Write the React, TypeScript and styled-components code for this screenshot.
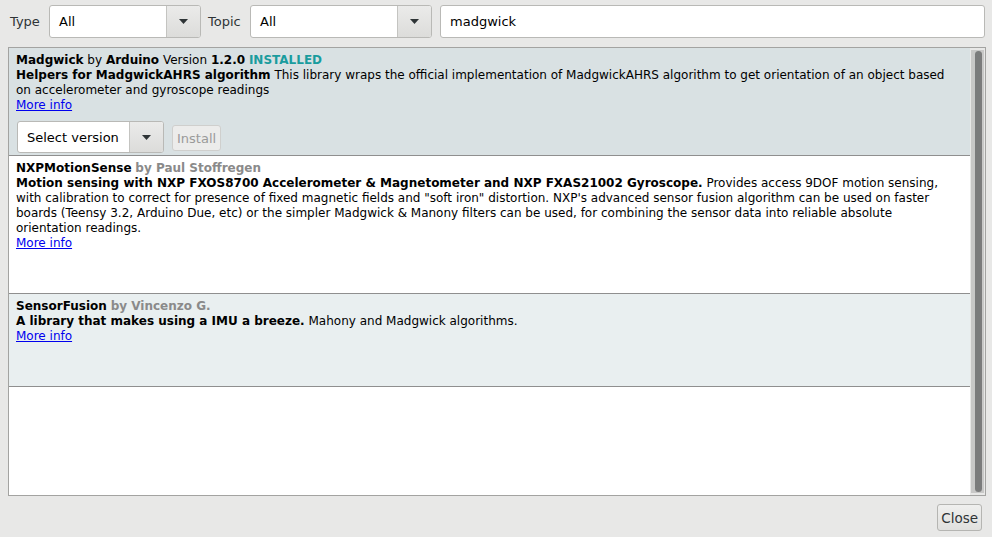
import React from 'react';
import styled, { createGlobalStyle } from 'styled-components';

const GlobalStyle = createGlobalStyle`
  html, body {
    margin: 0;
    padding: 0;
    background: #e8e8e7;
  }
  body {
    font-family: 'DejaVu Sans', 'Liberation Sans', sans-serif;
    color: #000;
  }
`;

const Window = styled.div`
  width: 992px;
  height: 537px;
  display: flex;
  flex-direction: column;
  background: #e8e8e7;
  overflow: hidden;
`;

const Toolbar = styled.div`
  display: flex;
  align-items: center;
  height: 33px;
  padding: 5px 7px 0 10px;
`;

const Label = styled.span<{ $width: number }>`
  width: ${(p) => p.$width}px;
  flex-shrink: 0;
  font-size: 13px;
  color: #2e3436;
`;

const Combo = styled.div<{ $width: number }>`
  width: ${(p) => p.$width}px;
  height: 33px;
  box-sizing: border-box;
  display: flex;
  border: 1px solid #b9b9b6;
  border-radius: 3px;
  background: #fff;
  margin-right: 7px;
  flex-shrink: 0;
`;

const ComboText = styled.div`
  flex: 1;
  display: flex;
  align-items: center;
  padding-left: 9px;
  font-size: 13px;
  color: #000;
`;

const ComboArrow = styled.div`
  width: 33px;
  display: flex;
  align-items: center;
  justify-content: center;
  border-left: 1px solid #c4c4c1;
  border-radius: 0 2px 2px 0;
  background: linear-gradient(#ebebea, #dcdcda);
`;

const SearchField = styled.div`
  flex: 1;
  height: 33px;
  box-sizing: border-box;
  border: 1px solid #b9b9b6;
  border-radius: 3px;
  background: #fff;
  display: flex;
  align-items: center;
  padding-left: 9px;
  font-size: 13px;
  margin-left: 1px;
`;

const Panel = styled.div`
  margin: 9px 6px 0 8px;
  height: 449px;
  box-sizing: border-box;
  border: 1px solid #a3a3a1;
  background: #fff;
  display: flex;
`;

const List = styled.div`
  flex: 1;
  display: flex;
  flex-direction: column;
`;

const Row = styled.div<{ $bg: string }>`
  background: ${(p) => p.$bg};
  border-bottom: 1px solid #8f8f8f;
  padding: 5px 10px 0 7px;
  font-size: 12px;
  line-height: 15px;
`;

const Desc = styled.div``;

const Strong = styled.b``;

const Author = styled.b`
  color: #8a8a8a;
`;

const Installed = styled.b`
  color: #1a9c9e;
`;

const Link = styled.a`
  color: #0000ee;
  text-decoration: underline;
  cursor: pointer;
`;

const Actions = styled.div`
  height: 42px;
  box-sizing: border-box;
  padding-top: 8px;
  display: flex;
  align-items: flex-start;
  gap: 8px;
`;

const SmallCombo = styled(Combo)`
  height: 32px;
  margin: 0 0 0 1px;
`;

const DisabledButton = styled.div`
  margin-top: 4px;
  height: 26px;
  box-sizing: border-box;
  padding: 0 4px;
  display: flex;
  align-items: center;
  border: 1px solid #cfcfcd;
  border-radius: 3px;
  background: #ececeb;
  color: #9a9a9a;
  font-size: 13px;
`;

const Scrollbar = styled.div`
  width: 15px;
  background: #e8e8e7;
  display: flex;
  padding: 2px 0 2px 0;
  box-sizing: border-box;
`;

const Track = styled.div`
  width: 13px;
  margin-left: 1px;
  background: #c8c8c7;
  display: flex;
  justify-content: center;
  padding: 1px 0;
`;

const Thumb = styled.div`
  width: 7px;
  margin-left: 1px;
  border-radius: 4px;
  background: #7b7c7c;
`;

const Footer = styled.div`
  display: flex;
  justify-content: flex-end;
  padding: 8px 10px 0 0;
`;

const Button = styled.div`
  height: 27px;
  box-sizing: border-box;
  padding: 0 3px;
  display: flex;
  align-items: center;
  border: 1px solid #b5b5b2;
  border-radius: 3px;
  background: linear-gradient(#efefee, #e0e0de);
  font-size: 13.5px;
  color: #2e3436;
`;

const Arrow = () => (
  <svg width="9" height="5" viewBox="0 0 9 5">
    <path d="M0 0h9L4.5 5z" fill="#2e3436" />
  </svg>
);

export default function App() {
  return (
    <Window>
      <GlobalStyle />
      <Toolbar>
        <Label $width={39}>Type</Label>
        <Combo $width={152}>
          <ComboText>All</ComboText>
          <ComboArrow>
            <Arrow />
          </ComboArrow>
        </Combo>
        <Label $width={42}>Topic</Label>
        <Combo $width={182}>
          <ComboText>All</ComboText>
          <ComboArrow>
            <Arrow />
          </ComboArrow>
        </Combo>
        <SearchField>madgwick</SearchField>
      </Toolbar>
      <Panel>
        <List>
          <Row $bg="#d9e1e3">
            <Desc>
              <Strong>Madgwick</Strong> by <Strong>Arduino</Strong> Version <Strong>1.2.0</Strong>{' '}
              <Installed>INSTALLED</Installed>
            </Desc>
            <Desc>
              <Strong>Helpers for MadgwickAHRS algorithm</Strong> This library wraps the official
              implementation of MadgwickAHRS algorithm to get orientation of an object based on
              accelerometer and gyroscope readings
            </Desc>
            <Link>More info</Link>
            <Actions>
              <SmallCombo $width={147}>
                <ComboText>Select version</ComboText>
                <ComboArrow>
                  <Arrow />
                </ComboArrow>
              </SmallCombo>
              <DisabledButton>Install</DisabledButton>
            </Actions>
          </Row>
          <Row $bg="#ffffff">
            <Desc>
              <Strong>NXPMotionSense</Strong> <Author>by Paul Stoffregen</Author>
            </Desc>
            <Desc>
              <Strong>
                Motion sensing with NXP FXOS8700 Accelerometer &amp; Magnetometer and NXP FXAS21002
                Gyroscope.
              </Strong>{' '}
              Provides access 9DOF motion sensing, with calibration to correct for presence of
              fixed magnetic fields and "soft iron" distortion. NXP's advanced sensor fusion
              algorithm can be used on faster boards (Teensy 3.2, Arduino Due, etc) or the simpler
              Madgwick &amp; Manony filters can be used, for combining the sensor data into reliable
              absolute orientation readings.
            </Desc>
            <Link>More info</Link>
            <Actions />
          </Row>
          <Row $bg="#e9eff0">
            <Desc>
              <Strong>SensorFusion</Strong> <Author>by Vincenzo G.</Author>
            </Desc>
            <Desc>
              <Strong>A library that makes using a IMU a breeze.</Strong> Mahony and Madgwick
              algorithms.
            </Desc>
            <Link>More info</Link>
            <Actions />
          </Row>
        </List>
        <Scrollbar>
          <Track>
            <Thumb />
          </Track>
        </Scrollbar>
      </Panel>
      <Footer>
        <Button>Close</Button>
      </Footer>
    </Window>
  );
}
